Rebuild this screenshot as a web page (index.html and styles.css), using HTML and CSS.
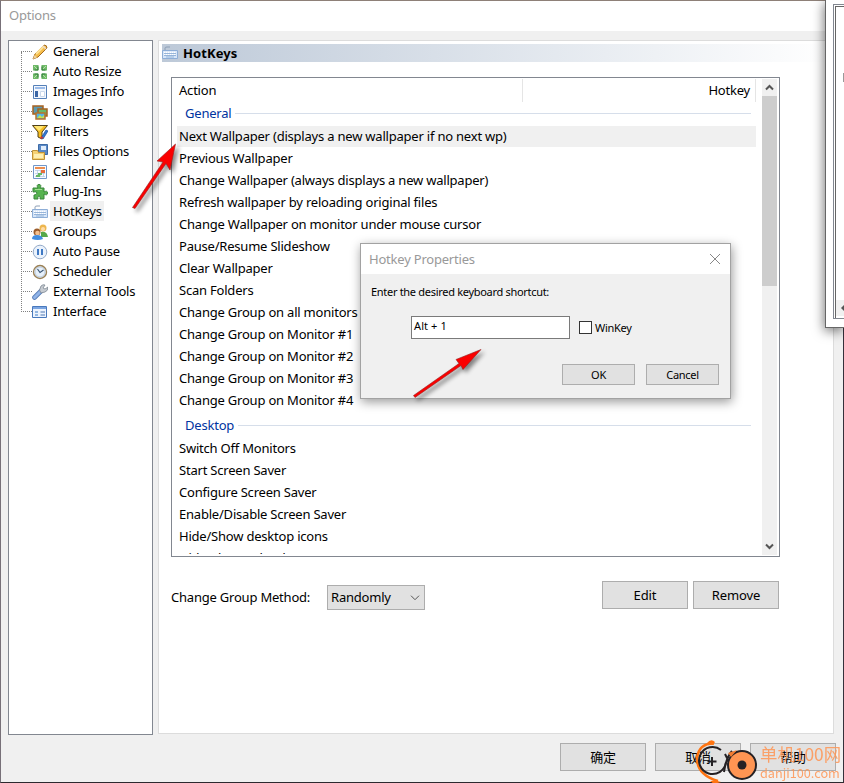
FILE: index.html
```html
<!DOCTYPE html>
<html lang="en">
<head>
<meta charset="utf-8">
<title>Options</title>
<link rel="stylesheet" href="styles.css">
</head>
<body>
<div class="window">
  <header class="titlebar"><span>Options</span></header>
  <main class="content">
    <nav class="tree">
      <ul>
        <li><svg viewBox="0 0 16 16"><path d="M1 15l2-5L12 1q3 0 3 3L6 13z" fill="#f5bd4b" stroke="#a56a1d"/><path d="M4 10l8-8" stroke="#ffe49a" stroke-width="2"/><path d="M1 15l1.500-4 2.500 2.500z" fill="#edd3a0"/><path d="M11 2l3 3" stroke="#e9d9cb" stroke-width="1.500"/></svg><span>General</span></li>
        <li><svg viewBox="0 0 16 16"><g fill="#6fb968"><path d="M1 1h5.500v5.500H1zM9.500 1H15v5.500H9.500zM1 9.500h5.500V15H1zM9.500 9.500H15V15H9.500z"/></g><path d="M2 2l3 3M14 2l-3 3M2 14l3-3M14 14l-3-3" stroke="#b5e0a9"/><path d="M2.500 6h3.500V2.500M10 2.500V6h3.500M2.500 10h3.500v3.500M10 13.500V10h3.500" stroke="#2e7d38" fill="none"/></svg><span>Auto Resize</span></li>
        <li><svg viewBox="0 0 16 16"><path d="M1.500 1.500h13v13h-13z" fill="#f3f7fd" stroke="#5580b8"/><path d="M3 3h10v2H3z" fill="#9cbce9"/><path d="M3 7h3v6H3z" fill="#3b66a5"/><path d="M8.500 7.500h4v5h-4z" fill="#fff" stroke="#cad8eb"/></svg><span>Images Info</span></li>
        <li><svg viewBox="0 0 16 16"><path d="M1 2h10v8H1z" fill="#5b9ab2" stroke="#a76120" stroke-width="1.500"/><path d="M6 5h9v7H6z" fill="#68b868" stroke="#a76120" stroke-width="1.500"/><path d="M4 9h9v6H4z" fill="#52b5e9" stroke="#b8732b" stroke-width="1.500"/><path d="M5 14l3-3 2 2 2-2v3z" fill="#c7e34d"/></svg><span>Collages</span></li>
        <li><svg viewBox="0 0 16 16"><path d="M.5 1.500h15L10 8v7l-4-2V8z" fill="#f7bd20" stroke="#50421b"/><path d="M2 2h10L7 7z" fill="#ffe777"/><path d="M9 14l5-8 2 1-5 8z" fill="#3479d4" stroke="#1e4f99" stroke-width=".7"/><path d="M8 15l1-3 3 2z" fill="#d5362d"/></svg><span>Filters</span></li>
        <li><svg viewBox="0 0 16 16"><path d="M6.500.5h9v10h-9z" fill="#5b8ac7" stroke="#3d6ba7"/><path d="M9 2h5v4H9z" fill="#e1edfb"/><path d="M.5 6.500h5l1 2h6v7H.500z" fill="#f6d274" stroke="#c09337"/><path d="M2 10h9v4H2z" fill="#fff0b4"/></svg><span>Files Options</span></li>
        <li><svg viewBox="0 0 16 16"><path d="M1.500 1.500h13v13h-13z" fill="#f8fbff" stroke="#7096c8"/><path d="M3 3h10v2H3z" fill="#ed8d4d"/><path d="M3 6.500h10M3 9.500h10M3 12.500h10M5.500 6v7M8.500 6v7M11.500 6v7" stroke="#b9cce5" stroke-width=".8"/><path d="M9 6h4v3H9z" fill="#e86c39"/><path d="M6 9h4v2H6zM4 11h4v2H4z" fill="#68b963"/></svg><span>Calendar</span></li>
        <li><svg viewBox="0 0 16 16"><path d="M1 4h5Q4 .5 7 .5T8 4h4v4q3.500-2 3.500 1T12 10v5H8q1-3-1-3t-1 3H2v-4q3 0 3-2T1 8z" fill="#56b34f" stroke="#39853a"/><path d="M3 5.500h7" stroke="#a1dc91"/></svg><span>Plug-Ins</span></li>
        <li class="selected"><svg viewBox="0 0 16 16"><use href="#keyboard"/></svg><span>HotKeys</span></li>
        <li><svg viewBox="0 0 16 16"><circle cx="11" cy="4" r="3.500" fill="#edb64e"/><path d="M9 8q6-1 7 5h-7z" fill="#57a849"/><circle cx="11" cy="5" r="2" fill="#ffdca8"/><circle cx="5" cy="8" r="3.500" fill="#9b5d2c"/><circle cx="5.500" cy="9" r="2.300" fill="#f6c18e"/><path d="M0 15q0-4 5-4t6 4q-5 2-11 0z" fill="#428ee0"/></svg><span>Groups</span></li>
        <li><svg viewBox="0 0 16 16"><circle cx="8" cy="8" r="6.800" fill="#eaf2fc" stroke="#94aac8"/><path d="M6 5v6M10 5v6" stroke="#3f79c4" stroke-width="2"/></svg><span>Auto Pause</span></li>
        <li><svg viewBox="0 0 16 16"><circle cx="8" cy="8" r="6.500" fill="#e6f0fa" stroke="#9a8055" stroke-width="1.400"/><circle cx="8" cy="8" r="5" fill="none" stroke="#bbcadb"/><path d="M5.500 5L8 8.500 11.500 6" fill="none" stroke="#3b5675" stroke-width="1.200"/></svg><span>Scheduler</span></li>
        <li><svg viewBox="0 0 16 16"><path d="M2.500 13.500L9 7" stroke="#5279b5" stroke-width="4.600" stroke-linecap="round"/><path d="M2.500 13.500L9 7" stroke="#91b4e8" stroke-width="3" stroke-linecap="round"/><path d="M7.500 6L9 2q2-2 4-1l-2 3 2 1 3-2q0 4-3 5l-4 1z" fill="#c6cbd1" stroke="#7e8893" stroke-width=".8"/></svg><span>External Tools</span></li>
        <li><svg viewBox="0 0 16 16"><path d="M.5 2.500h14v11H.500z" fill="#edf4fe" stroke="#4979bd"/><path d="M1 3h13v2H1z" fill="#7ba5e1"/><path d="M3 8h3M3 11h3" stroke="#397ac4"/><path d="M8.500 8h4.500M8.500 11h4.500" stroke="#5079b2" stroke-width="1.200"/></svg><span>Interface</span></li>
      </ul>
    </nav>
    <section class="panel">
      <h1><svg viewBox="0 0 16 16"><use href="#keyboard"/></svg><span>HotKeys</span></h1>
      <div class="list">
        <div class="rows">
          <div class="columns"><span>Action</span><span>Hotkey</span></div>
          <h2>General</h2>
          <p class="selected">Next Wallpaper (displays a new wallpaper if no next wp)</p>
          <p>Previous Wallpaper</p>
          <p>Change Wallpaper (always displays a new wallpaper)</p>
          <p>Refresh wallpaper by reloading original files</p>
          <p>Change Wallpaper on monitor under mouse cursor</p>
          <p>Pause/Resume Slideshow</p>
          <p>Clear Wallpaper</p>
          <p>Scan Folders</p>
          <p>Change Group on all monitors</p>
          <p>Change Group on Monitor #1</p>
          <p>Change Group on Monitor #2</p>
          <p>Change Group on Monitor #3</p>
          <p>Change Group on Monitor #4</p>
          <h2>Desktop</h2>
          <p>Switch Off Monitors</p>
          <p>Start Screen Saver</p>
          <p>Configure Screen Saver</p>
          <p>Enable/Disable Screen Saver</p>
          <p>Hide/Show desktop icons</p>
          <p>Hide/Show calendar</p>
        </div>
        <div class="scrollbar">
          <svg viewBox="0 0 15 17"><path d="M4 10.500L7.500 7 11 10.500"/></svg>
          <div class="thumb"></div>
          <svg viewBox="0 0 15 17"><path d="M4 6.500L7.500 10 11 6.500"/></svg>
        </div>
      </div>
      <div class="controls">
        <span class="label">Change Group Method:</span>
        <div class="select"><span>Randomly</span><svg viewBox="0 0 10 6"><path d="M1 .7l4 4 4-4"/></svg></div>
        <button class="edit">Edit</button><button>Remove</button>
      </div>
    </section>
  </main>
  <footer><button>确定</button><button>取消</button><button>帮助</button></footer>
</div>

<aside class="behind"><div><i></i><b><svg viewBox="0 0 8 8"><path d="M7 0L3 4l4 4z"/></svg></b></div></aside>

<div class="dialog">
  <header><span>Hotkey Properties</span><svg viewBox="0 0 12 12"><path d="M1 1l10 10M11 1L1 11"/></svg></header>
  <p>Enter the desired keyboard shortcut:</p>
  <div class="entry"><div class="field">Alt + 1</div><i></i><span>WinKey</span></div>
  <div class="actions"><button>OK</button><button>Cancel</button></div>
</div>

<svg class="arrows" viewBox="0 0 844 783">
  <path d="M132.500 207.500L163 162l-6-1 18.500-17-5.500 26-4-6.500-31 45z"/>
  <path d="M413.500 395.500L459 363.500l-3-4 25-10-18 20-2-4-46 32z"/>
</svg>

<div class="watermark">
  <svg viewBox="0 0 64 44">
    <path d="M20 3.500Q5 3 3 18q0 17 21 23" fill="none" stroke="#ff7411" stroke-width="2.500"/>
    <path d="M13 3q4-5 8-1l-2 3zM16 41q6-1 11 1l-7 2z" fill="#ff7411"/>
    <path d="M27 10A13.500 13.500 0 1 0 32 22" fill="none" stroke="#252124" stroke-width="2"/>
    <path d="M18 17v9M13.500 21.500h9M31 14l4 8M38 11q-6 7-8 21" fill="none" stroke="#252124" stroke-width="2"/>
    <circle cx="48" cy="25" r="14" fill="#ff9553" stroke="#252124" stroke-width="2"/><path d="M34 13l9-3-6 7z" fill="#f17b31"/>
    <circle cx="48" cy="25" r="4.500" fill="#252124"/>
  </svg>
  <div><strong>单机100网</strong><span>danji100.com</span></div>
</div>

<svg class="defs"><defs><g id="keyboard"><path d="M3 5V3q0-1 2-1h3" fill="none" stroke="#8c9eb5"/><path d="M.5 5.500h15v8H.500z" fill="#d7e6f9" stroke="#8eaed7"/><path d="M2 7.500h12M2 9.500h12" stroke="#fff" stroke-width="1.300" stroke-dasharray="1.300 .7"/><path d="M2 8.500h12M2 10.500h12M4 12h8" stroke="#779dcc" stroke-width=".7"/></g></defs></svg>
</body>
</html>
```
FILE: styles.css
```css
* { box-sizing: border-box; }
body {
  margin: 0;
  width: 844px;
  height: 783px;
  overflow: hidden;
  position: relative;
  background: #f0f0f0;
  color: #000;
  font: 13px/20px "Noto Sans", "Noto Sans CJK SC", sans-serif;
  letter-spacing: -.21px;
}
h1, h2, p, ul { margin: 0; padding: 0; font-weight: 400; font-size: 13px; }
button {
  border: 1px solid #adadad;
  background: #e1e1e1;
  padding: 0;
  font: inherit;
  letter-spacing: inherit;
  color: inherit;
}
.window {
  width: 844px;
  height: 783px;
  display: flex;
  flex-direction: column;
  border: 1px solid #8e8078;
  border-left-color: #777078;
  border-right-color: #35313b;
  border-bottom-color: #2c292e;
}
.titlebar { height: 30px; background: #fff; padding: 4px 8px; color: #999; }
.content { display: flex; gap: 5px; padding: 9px 0 0 7px; height: 704px; }
.tree { width: 145px; height: 695px; border: 1px solid #828790; background: #fff; padding: 0 0 0 12px; }
.tree ul { position: relative; list-style: none; }
.tree ul::before { content: ""; position: absolute; left: 0; top: 11px; height: 260px; border-left: 1px dotted #808080; }
.tree li { display: flex; align-items: center; height: 20px; }
.tree li::before { content: ""; width: 11px; border-top: 1px dotted #808080; }
.tree li svg { position: relative; top: 1px; width: 16px; height: 16px; margin-right: 2px; }
.tree li span { padding: 0 2px 0 3px; height: 20px; white-space: nowrap; }
.tree .selected span { background: #f0f0f0; }
.panel { width: 676px; height: 694px; border: 1px solid #dcdcdc; background: #fff; padding: 3px 0 0 3px; }
h1 { display: flex; align-items: center; height: 18px; width: 666px; background: linear-gradient(90deg, #bdc9d8, #fff); }
h1 svg { width: 16px; height: 16px; }
h1 span { font-weight: 700; margin-left: 5px; letter-spacing: .1px; }
.list { display: flex; justify-content: space-between; width: 609px; height: 480px; margin: 15px 0 0 9px; border: 1px solid #828790; padding: 1px 2px 1px 5px; }
.rows { width: 579px; height: 475px; overflow: hidden; }
.rows p { height: 22px; padding-left: 2px; line-height: 21px; white-space: nowrap; }
.rows .selected { background: linear-gradient(#f0f0f0, #f0f0f0) 0 0 / 100% 21px no-repeat; }
.columns { display: flex; height: 21px; line-height: 23px; }
.columns span { padding-left: 2px; width: 346px; height: 23px; border-right: 1px solid #e5e5e5; }
.columns span + span { width: 233px; padding-right: 5px; text-align: right; }
h2 { display: flex; align-items: center; height: 26px; padding: 0 5px 0 8px; color: #0033a0; }
h2::after { content: ""; flex: 1; height: 1px; margin: 0 0 0 4px; background: #d6deea; }
.scrollbar { width: 15px; display: flex; flex-direction: column; background: #f0f0f0; }
.scrollbar svg { width: 15px; height: 17px; fill: none; stroke: #555; stroke-width: 2; }
.thumb { height: 190px; background: #cdcdcd; margin-bottom: auto; }
.controls { display: flex; align-items: flex-start; margin: 24px 0 0 9px; }
.label { width: 156px; padding-top: 6px; white-space: nowrap; }
.select { display: flex; align-items: center; justify-content: space-between; margin-top: 4px; width: 98px; height: 25px; border: 1px solid #adadad; background: #e1e1e1; padding: 0 4px 0 3px; line-height: 22px; }
.select span { height: 23px; }
.select svg { width: 10px; height: 6px; fill: none; stroke: #555; }
.controls button { width: 86px; height: 28px; margin-left: 5px; padding-bottom: 1px; letter-spacing: -.1px; }
.controls .edit { margin-left: 177px; }
footer { display: flex; gap: 9px; margin: 8px 0 0 559px; }
footer button { width: 86px; height: 28px; font-family: "Noto Sans CJK SC", sans-serif; }
.behind { position: absolute; left: 825px; top: 0; width: 19px; height: 328px; background: #fff; border: solid #666; border-width: 0 0 1px 1px; padding: 4px 0 0 7px; box-shadow: -1px 3px 12px #0008; }
.behind div { display: flex; flex-direction: column; justify-content: space-between; height: 315px; border: solid #828790; border-width: 1px 0 1px 1px; padding: 1px 0 2px 1px; box-shadow: inset 1px 1px #fff, inset 2px 2px #666; }
.behind i { align-self: flex-end; width: 1px; height: 9px; margin-top: 67px; background: #999; }
.behind b { height: 16px; margin-left: 1px; background: #f0f0f0; }
.behind svg { display: block; margin: 4px 0 0 2px; width: 8px; height: 8px; fill: #555; }
.dialog { position: absolute; left: 360px; top: 243px; width: 371px; height: 156px; border: 1px solid #a2a2a2; background: #f0f0f0; box-shadow: 1px 3px 10px #0006; font-size: 11px; letter-spacing: -.3px; }
.dialog header { display: flex; justify-content: space-between; align-items: center; height: 30px; background: #fff; color: #999; padding: 0 9px 0 8px; font-size: 13px; letter-spacing: -.21px; }
.dialog header span { margin-top: -1px; }
.dialog header svg { width: 12px; height: 12px; fill: none; stroke: #888; }
.dialog p { margin: 8px 10px 0; font-size: 11px; }
.entry { display: flex; align-items: center; margin: 14px 0 0 50px; }
.field { width: 159px; height: 23px; border: 1px solid #7a7a7a; background: #fff; padding-left: 2px; line-height: 18px; letter-spacing: .1px; }
.entry i { width: 13px; height: 13px; border: 1px solid #333; background: #fff; margin: 0 3px 0 9px; }
.actions { display: flex; gap: 11px; margin: 25px 0 0 201px; }
.actions button { width: 73px; height: 21px; line-height: 19px; }
.arrows { position: absolute; left: 0; top: 0; width: 844px; height: 783px; pointer-events: none; filter: drop-shadow(3px 3px 2px #0007); }
.arrows path { fill: #fa0000; stroke: #942020; stroke-width: .6; }
.watermark { position: absolute; left: 694px; top: 740px; display: flex; color: #ff9553; letter-spacing: 0; }
.watermark svg { width: 64px; height: 44px; }
.watermark div { display: flex; flex-direction: column; margin-left: 2px; opacity: .85; }
.watermark strong { font: 400 17.400px/27px "Noto Sans CJK SC", sans-serif; white-space: nowrap; }
.watermark span { font: 12.700px/11px "Noto Sans CJK SC", sans-serif; }
.defs { position: absolute; width: 0; height: 0; }
```
